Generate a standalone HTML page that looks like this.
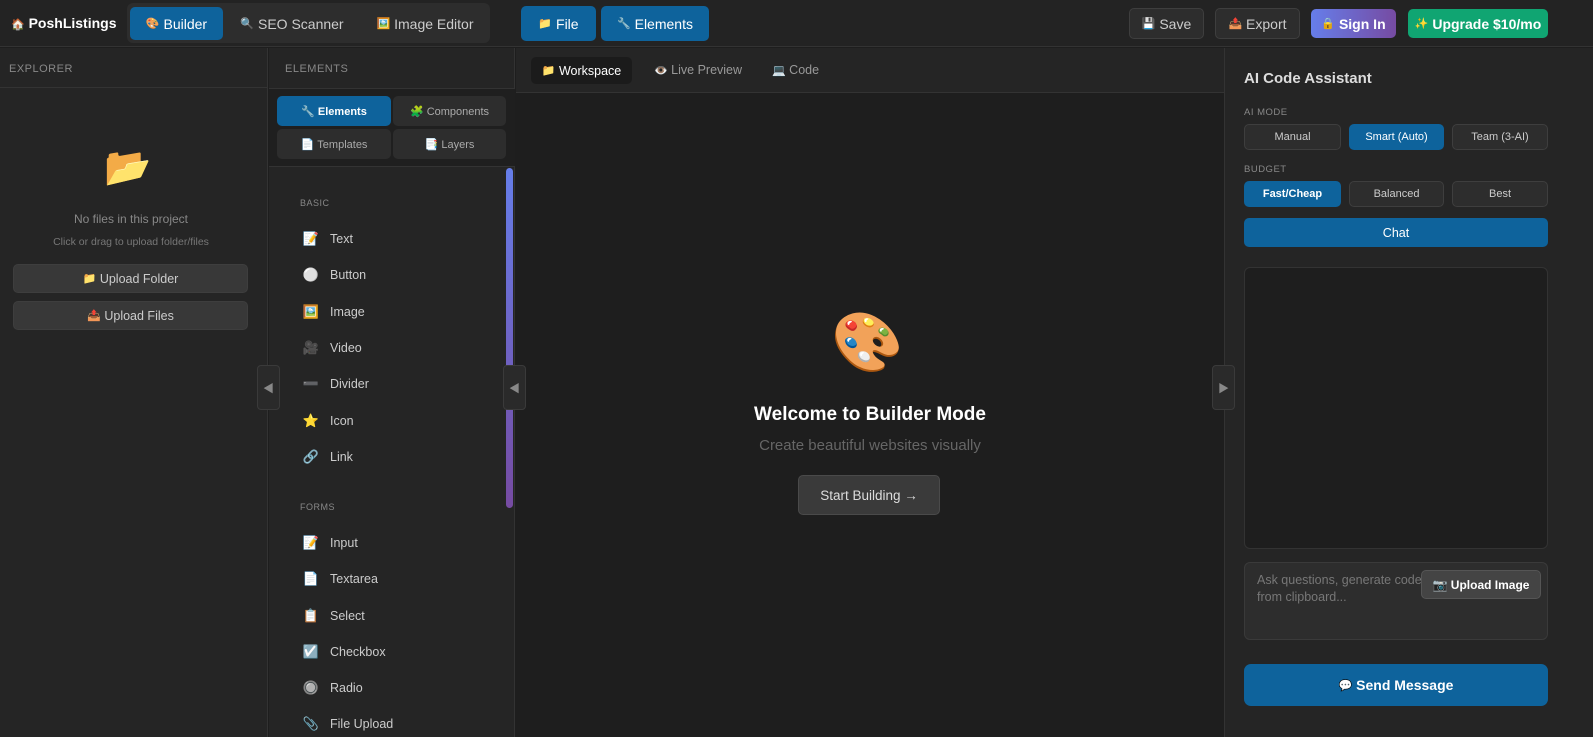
<!DOCTYPE html>
<html><head><meta charset="utf-8"><style>
*{box-sizing:border-box;margin:0;padding:0}
body{width:1593px;height:737px;overflow:hidden;background:#1e1e1e;font-family:"Liberation Sans","Noto Sans CJK SC",sans-serif;color:#ccc;position:relative;font-size:13px}
.a{position:absolute}
.btn{position:absolute;display:flex;align-items:center;justify-content:center;border-radius:5px;font-size:14px}
.blue{background:#0e639c;color:#fff}
.dk{background:#2d2d2d;border:1px solid #3e3e3e;color:#ccc}
.item{position:absolute;left:302px;display:flex;align-items:center;font-size:12.5px;color:#ccc}
.item span.e{width:18px;margin-right:10px;font-size:13px;text-align:center}
.lbl{position:absolute;font-size:10px;letter-spacing:.5px;color:#888}
.col{position:absolute;z-index:5;width:23px;height:45px;background:#2a2a2a;border:1px solid #3a3a3a;border-radius:4px;color:#888;display:flex;align-items:center;justify-content:center;font-size:11px}
.sm{font-size:11px}
</style></head><body>
<!-- top bar -->
<div class="a" style="left:0;top:0;width:1593px;height:47px;background:#232323;border-bottom:1px solid #333"></div>
<div class="a" style="left:11px;top:15px;font-size:14px;font-weight:bold;color:#fff"><span class="sm">🏠</span> PoshListings</div>
<div class="a" style="left:127px;top:3px;width:363px;height:40px;background:#2d2d2d;border-radius:6px"></div>
<div class="btn blue" style="left:130px;top:7px;width:93px;height:33px"><span class="sm">🎨</span>&nbsp;Builder</div>
<div class="btn" style="left:232px;top:7px;width:120px;height:33px;color:#ccc"><span class="sm">🔍</span>&nbsp;SEO Scanner</div>
<div class="btn" style="left:370px;top:7px;width:110px;height:33px;color:#ccc"><span class="sm">🖼️</span>&nbsp;Image Editor</div>
<div class="btn blue" style="left:521px;top:6px;width:75px;height:35px"><span class="sm">📁</span>&nbsp;File</div>
<div class="btn blue" style="left:601px;top:6px;width:108px;height:35px"><span class="sm">🔧</span>&nbsp;Elements</div>
<div class="btn dk" style="left:1129px;top:8px;width:75px;height:31px"><span class="sm">💾</span>&nbsp;Save</div>
<div class="btn dk" style="left:1215px;top:8px;width:85px;height:31px"><span class="sm">📤</span>&nbsp;Export</div>
<div class="btn" style="left:1311px;top:9px;width:85px;height:29px;background:linear-gradient(90deg,#667eea,#764ba2);color:#fff;font-weight:bold"><span class="sm">🔒</span>&nbsp;Sign In</div>
<div class="btn" style="left:1408px;top:9px;width:140px;height:29px;background:#10a572;color:#fff;font-weight:bold"><span class="sm">✨</span>&nbsp;Upgrade $10/mo</div>

<!-- explorer -->
<div class="a" style="left:0;top:48px;width:268px;height:689px;background:#252525;border-right:1px solid #333"></div>
<div class="a" style="left:0;top:87px;width:268px;height:1px;background:#333"></div>
<div class="lbl" style="left:9px;top:63px;font-size:11px">EXPLORER</div>
<div class="a" style="left:104px;top:146px;font-size:38px">📂</div>
<div class="a" style="left:0;top:212px;width:262px;text-align:center;font-size:12px;color:#888">No files in this project</div>
<div class="a" style="left:0;top:236px;width:262px;text-align:center;font-size:10.5px;color:#777">Click or drag to upload folder/files</div>
<div class="btn dk" style="left:13px;top:264px;width:235px;height:29px;font-size:12.5px;background:#383838"><span class="sm">📁</span>&nbsp;Upload Folder</div>
<div class="btn dk" style="left:13px;top:301px;width:235px;height:29px;font-size:12.5px;background:#383838"><span class="sm">📤</span>&nbsp;Upload Files</div>

<!-- elements panel -->
<div class="a" style="left:269px;top:48px;width:246px;height:689px;background:#252525;border-right:1px solid #333"></div>
<div class="a" style="left:269px;top:88px;width:246px;height:1px;background:#333"></div>
<div class="lbl" style="left:285px;top:63px;font-size:11px">ELEMENTS</div>
<div class="a" style="left:269px;top:89px;width:246px;height:78px;background:#1f1f1f;border-bottom:1px solid #333"></div>
<div class="btn blue" style="left:277px;top:96px;width:114px;height:30px;font-size:11px;font-weight:bold">🔧&nbsp;Elements</div>
<div class="btn" style="left:393px;top:96px;width:113px;height:30px;font-size:11px;background:#2d2d2d;color:#aaa">🧩&nbsp;Components</div>
<div class="btn" style="left:277px;top:129px;width:114px;height:30px;font-size:11px;background:#2d2d2d;color:#aaa">📄&nbsp;Templates</div>
<div class="btn" style="left:393px;top:129px;width:113px;height:30px;font-size:11px;background:#2d2d2d;color:#aaa">📑&nbsp;Layers</div>
<div class="a" style="left:506px;top:168px;width:7px;height:340px;border-radius:4px;background:linear-gradient(#667eea,#764ba2)"></div>
<div class="lbl" style="left:300px;top:198px;font-size:9px">BASIC</div>
<div class="item" style="top:231px"><span class="e">📝</span>Text</div>
<div class="item" style="top:267px"><span class="e">⚪</span>Button</div>
<div class="item" style="top:304px"><span class="e">🖼️</span>Image</div>
<div class="item" style="top:340px"><span class="e">🎥</span>Video</div>
<div class="item" style="top:376px"><span class="e">➖</span>Divider</div>
<div class="item" style="top:413px"><span class="e">⭐</span>Icon</div>
<div class="item" style="top:449px"><span class="e">🔗</span>Link</div>
<div class="lbl" style="left:300px;top:502px;font-size:9px">FORMS</div>
<div class="item" style="top:535px"><span class="e">📝</span>Input</div>
<div class="item" style="top:571px"><span class="e">📄</span>Textarea</div>
<div class="item" style="top:608px"><span class="e">📋</span>Select</div>
<div class="item" style="top:644px"><span class="e">☑️</span>Checkbox</div>
<div class="item" style="top:680px"><span class="e">🔘</span>Radio</div>
<div class="item" style="top:716px"><span class="e">📎</span>File Upload</div>

<!-- center -->
<div class="a" style="left:516px;top:48px;width:708px;height:45px;background:#252525;border-bottom:1px solid #333"></div>
<div class="btn" style="left:531px;top:57px;width:101px;height:27px;background:#1b1b1b;color:#fff;font-size:12.5px"><span class="sm">📁</span>&nbsp;Workspace</div>
<div class="a" style="left:654px;top:63px;font-size:12.5px;color:#999"><span class="sm">👁️</span>&nbsp;Live Preview</div>
<div class="a" style="left:772px;top:63px;font-size:12.5px;color:#999"><span class="sm">💻</span>&nbsp;Code</div>
<div class="a" style="left:831px;top:314px;font-size:58px;line-height:1">🎨</div>
<div class="a" style="left:516px;top:404px;width:708px;text-align:center;font-size:19px;font-weight:bold;color:#fff">Welcome to Builder Mode</div>
<div class="a" style="left:516px;top:437px;width:708px;text-align:center;font-size:15px;color:#666">Create beautiful websites visually</div>
<div class="btn" style="left:798px;top:475px;width:142px;height:40px;background:#3a3a3a;border:1px solid #4a4a4a;color:#ddd;font-size:13.5px">Start Building →</div>

<!-- right -->
<div class="a" style="left:1224px;top:48px;width:369px;height:689px;background:#252525;border-left:1px solid #333"></div>
<div class="a" style="left:1244px;top:70px;font-size:15px;font-weight:bold;color:#ddd">AI Code Assistant</div>
<div class="lbl" style="left:1244px;top:107px;font-size:9.5px">AI MODE</div>
<div class="btn dk" style="left:1244px;top:124px;width:97px;height:26px;font-size:11px">Manual</div>
<div class="btn blue" style="left:1349px;top:124px;width:95px;height:26px;font-size:11px">Smart (Auto)</div>
<div class="btn dk" style="left:1452px;top:124px;width:96px;height:26px;font-size:11px">Team (3-AI)</div>
<div class="lbl" style="left:1244px;top:164px;font-size:9.5px">BUDGET</div>
<div class="btn blue" style="left:1244px;top:181px;width:97px;height:26px;font-size:11px;font-weight:bold">Fast/Cheap</div>
<div class="btn dk" style="left:1349px;top:181px;width:95px;height:26px;font-size:11px">Balanced</div>
<div class="btn dk" style="left:1452px;top:181px;width:96px;height:26px;font-size:11px">Best</div>
<div class="btn blue" style="left:1244px;top:218px;width:304px;height:29px;font-size:12.5px">Chat</div>
<div class="a" style="left:1244px;top:267px;width:304px;height:282px;background:#1e1e1e;border:1px solid #333;border-radius:6px"></div>
<div class="a" style="left:1244px;top:562px;width:304px;height:78px;background:#2d2d2d;border:1px solid #3a3a3a;border-radius:6px;padding:9px 12px;font-size:12.5px;line-height:17px;color:#777">Ask questions, generate code<br>from clipboard...</div>
<div class="btn" style="left:1421px;top:570px;width:120px;height:29px;background:#444;border:1px solid #555;color:#fff;font-size:12px;font-weight:bold">📷&nbsp;Upload Image</div>
<div class="btn blue" style="left:1244px;top:664px;width:304px;height:42px;font-size:14px;font-weight:bold;border-radius:7px"><span class="sm">💬</span>&nbsp;Send Message</div>

<div class="col" style="left:257px;top:365px">◀</div>
<div class="col" style="left:503px;top:365px">◀</div>
<div class="col" style="left:1212px;top:365px">▶</div>
</body></html>
